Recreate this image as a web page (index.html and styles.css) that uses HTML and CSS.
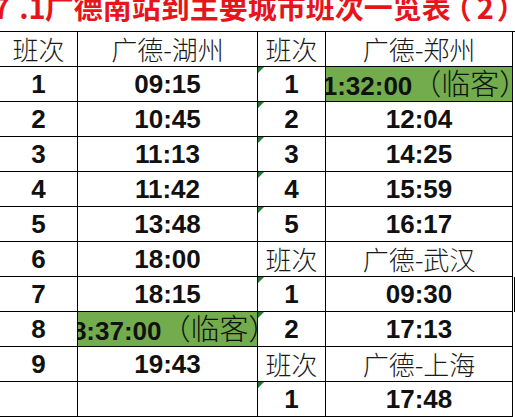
FILE: index.html
```html
<!DOCTYPE html>
<html lang="zh-CN">
<head>
<meta charset="utf-8">
<title>广德南站到主要城市班次一览表（2）</title>
<link rel="stylesheet" href="styles.css">
</head>
<body>
<div class="title"><span class="title-text"><span class="t-lat">7</span><span class="t-dot">.</span><span class="t-one">1</span><span class="t-cjk">广德南站到主要城市班次一览表</span><span class="t-lp">（</span><span class="t-two">2</span><span class="t-rp">）</span></span></div>
<div class="sheet">
  <div class="c h">班次</div><div class="c h">广德-湖州</div><div class="c h">班次</div><div class="c h">广德-郑州</div>

  <div class="c n">1</div><div class="c n">09:15</div><div class="c n tri">1</div>
  <div class="c g"><span class="ov"><span class="ovn">11:32:00</span><span class="ovc">（临客）</span></span></div>

  <div class="c n">2</div><div class="c n">10:45</div><div class="c n tri">2</div><div class="c n">12:04</div>
  <div class="c n">3</div><div class="c n">11:13</div><div class="c n tri">3</div><div class="c n">14:25</div>
  <div class="c n">4</div><div class="c n">11:42</div><div class="c n tri">4</div><div class="c n">15:59</div>
  <div class="c n">5</div><div class="c n">13:48</div><div class="c n tri">5</div><div class="c n">16:17</div>

  <div class="c n">6</div><div class="c n">18:00</div><div class="c h">班次</div><div class="c h">广德-武汉</div>
  <div class="c n">7</div><div class="c n">18:15</div><div class="c n tri">1</div><div class="c n dbl">09:30</div>

  <div class="c n">8</div>
  <div class="c g"><span class="ov"><span class="ovn">18:37:00</span><span class="ovc">（临客）</span></span></div>
  <div class="c n tri">2</div><div class="c n">17:13</div>

  <div class="c n">9</div><div class="c n">19:43</div><div class="c h">班次</div><div class="c h">广德-上海</div>
  <div class="c"></div><div class="c"></div><div class="c n tri">1</div><div class="c n">17:48</div>
</div>
</body>
</html>
```
FILE: styles.css
```css
html, body {
  margin: 0;
  padding: 0;
  background: #ffffff;
}

body {
  width: 515px;
  height: 417px;
  overflow: hidden;
  font-family: "Liberation Sans", "Noto Sans CJK SC", sans-serif;
  color: #111111;
}

.title {
  box-sizing: border-box;
  height: 32px;
  border-bottom: 1px solid #000000;
  overflow: hidden;
  white-space: nowrap;
  color: #e8141c;
  font-family: "Noto Sans CJK SC", sans-serif;
  font-weight: bold;
  font-size: 29px;
  line-height: 29px;
}

.title-text {
  display: block;
  margin-top: -8px;
  margin-left: -7px;
}

.t-dot {
  margin-left: 9px;
}

.t-one {
  margin-right: -1px;
}

.t-lp {
  margin-left: -8px;
}

.t-two {
  margin-left: 5px;
}

.t-rp {
  margin-left: 3px;
}

.sheet {
  display: grid;
  grid-template-columns: 78px 180px 68px 187px;
  grid-auto-rows: 35px;
}

.c {
  position: relative;
  box-sizing: border-box;
  border-right: 1px solid #000000;
  border-bottom: 1px solid #000000;
  display: flex;
  align-items: center;
  justify-content: center;
  overflow: hidden;
  white-space: nowrap;
  font-size: 26px;
  line-height: 26px;
}

.n {
  font-family: "Liberation Sans", sans-serif;
  font-weight: bold;
}

.h {
  font-family: "Noto Sans CJK SC", sans-serif;
  font-weight: 300;
  color: #1a1a1a;
}

.g {
  background: #72ac4d;
}

.ov {
  flex: none;
  display: flex;
  align-items: baseline;
}

.ovn {
  font-family: "Liberation Sans", sans-serif;
  font-weight: bold;
  font-size: 26px;
}

.ovc {
  font-family: "Noto Sans CJK SC", sans-serif;
  font-weight: 300;
  font-size: 29px;
}

.tri::before {
  content: "";
  position: absolute;
  top: 0;
  left: 0;
  border-top: 6px solid #1f7a32;
  border-right: 6px solid transparent;
}

.dbl {
  box-shadow: 1px 0 0 #ffffff, 2px 0 0 #000000;
}
```
